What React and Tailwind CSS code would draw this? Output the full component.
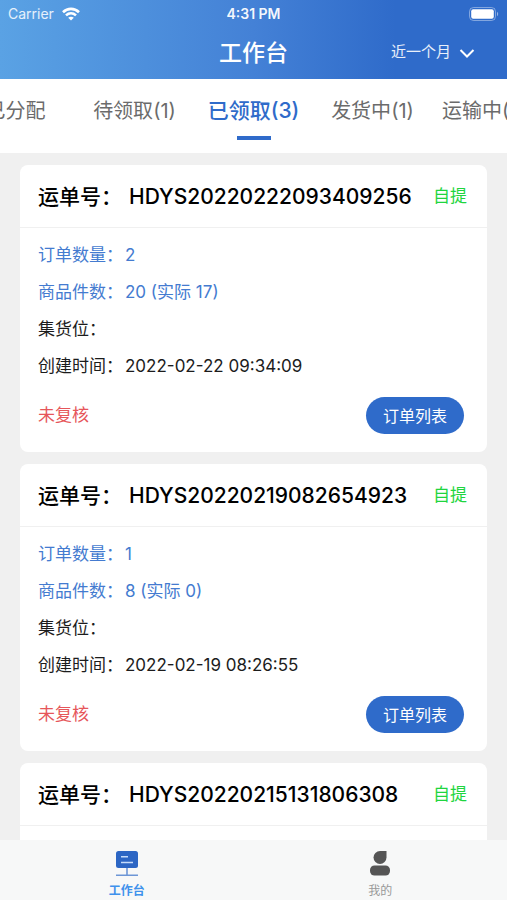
import React, { useState } from 'react';

const tabs = [
    { id: 'assigned', label: '已分配' },
    { id: 'pending', label: '待领取', count: 1 },
    { id: 'received', label: '已领取', count: 3 },
    { id: 'shipping', label: '发货中', count: 1 },
    { id: 'transit', label: '运输中', count: 28 },
];

const waybills = [
    { no: 'HDYS20220222093409256', orders: 2, goods: 20, actual: 17, location: '', created: '2022-02-22 09:34:09' },
    { no: 'HDYS20220219082654923', orders: 1, goods: 8, actual: 0, location: '', created: '2022-02-19 08:26:55' },
    { no: 'HDYS20220215131806308', orders: 1, goods: 6, actual: 0, location: '', created: '2022-02-15 13:18:06' },
];

function StatusBar() {
    return (
        <div className="grid grid-cols-3 items-center h-7 px-2 text-sm">
            <div className="flex items-center gap-2 text-white/85">
                <span>Carrier</span>
                <svg width="18" height="14" viewBox="0 0 18 14" fill="none" stroke="white" strokeWidth="2.6">
                    <path d="M1 5.2C5.6.7 12.4.7 17 5.2" />
                    <path d="M4 8.4c3-2.8 7-2.8 10 0" />
                    <path d="M9 13.6 6.2 10.8c1.6-1.5 4-1.5 5.6 0z" fill="white" stroke="none" />
                </svg>
            </div>
            <span className="text-center font-semibold text-white/95">4:31 PM</span>
            <svg className="justify-self-end" width="30" height="14" viewBox="0 0 30 14">
                <rect x="0.5" y="0.5" width="26" height="13" rx="4" fill="none" stroke="white" strokeOpacity="0.4" />
                <rect x="2.2" y="2.2" width="22.6" height="9.6" rx="2" fill="white" />
                <path d="M28 4.8c1.6.8 1.6 3.6 0 4.4z" fill="white" fillOpacity="0.5" />
            </svg>
        </div>
    );
}

function Header() {
    return (
        <header className="shrink-0 bg-linear-to-r from-[#5aa2e4] via-[#4481d6] via-50% to-[#2f6bca] to-78% text-white">
            <StatusBar />
            <div className="grid grid-cols-3 items-center h-[51px] pb-0.5">
                <h1 className="col-start-2 text-center text-[23px] leading-7 font-medium">工作台</h1>
                <button className="flex items-center justify-end gap-2 pr-8 text-[15px] text-white/90">
                    近一个月
                    <svg width="16" height="12" viewBox="0 0 16 12" fill="none" stroke="white" strokeWidth="2">
                        <path d="m1.5 3 6.5 6.5L14.5 3" />
                    </svg>
                </button>
            </div>
        </header>
    );
}

function InfoRow({ label, value, className }) {
    return (
        <p className={`flex gap-0.5 ${className || ''}`}>
            <span>{label}：</span>
            <span>{value}</span>
        </p>
    );
}

function WaybillCard({ bill }) {
    return (
        <article className="shrink-0 bg-white rounded-lg">
            <div className="flex items-center justify-between h-[63px] pt-0.5 pl-[18px] pr-5 border-b border-[#f0f0f0]">
                <h2 className="flex text-[21px] font-medium text-black whitespace-nowrap">
                    <span className="w-[91px]">运单号：</span>
                    <span>{bill.no}</span>
                </h2>
                <span className="text-[17px] text-[#1fd53f]">自提</span>
            </div>
            <div className="pt-[9px] pb-[18px] pl-[18px] pr-[23px] text-[17px] leading-[37px] text-[#1c1c1c]">
                <InfoRow label="订单数量" value={bill.orders} className="text-[#447bd0]" />
                <InfoRow label="商品件数" value={`${bill.goods} (实际 ${bill.actual})`} className="text-[#447bd0]" />
                <InfoRow label="集货位" value={bill.location} />
                <InfoRow label="创建时间" value={bill.created} />
                <div className="flex items-center justify-between mt-3">
                    <span className="text-[#e6565a]">未复核</span>
                    <button className="h-[37px] px-[17px] rounded-full bg-[#2f6bca] text-base text-white">订单列表</button>
                </div>
            </div>
        </article>
    );
}

export default function App() {
    const [activeTab, setActiveTab] = useState('received');

    return (
        <div className="flex flex-col h-screen overflow-hidden bg-[#f0f0f0] font-['Inter','Noto_Sans_CJK_SC',sans-serif]">
            <Header />

            {/* Status tabs */}
            <nav className="shrink-0 flex justify-center h-[74px] overflow-hidden bg-white">
                {tabs.map(tab => {
                    const active = tab.id === activeTab;
                    return (
                        <button
                            key={tab.id}
                            onClick={() => setActiveTab(tab.id)}
                            className={`shrink-0 w-[119px] flex flex-col items-center pt-[17px] whitespace-nowrap ${active ? 'text-[21px] font-medium text-[#2f6bca]' : 'text-xl text-[#6b6b6b]'}`}
                        >
                            <span className="leading-[30px]">{tab.label}{tab.count ? `(${tab.count})` : ''}</span>
                            {active && <span className="mt-2.5 w-[34px] h-1 bg-[#2f6bca]"></span>}
                        </button>
                    );
                })}
            </nav>

            {/* Waybill list */}
            <main className="flex-1 min-h-0 overflow-y-auto [scrollbar-width:none] flex flex-col gap-3 px-5 py-3">
                {waybills.map(bill => (
                    <WaybillCard key={bill.no} bill={bill} />
                ))}
            </main>

            {/* Bottom navigation */}
            <nav className="shrink-0 grid grid-cols-2 h-[60px] bg-[#f7f8f8] text-xs">
                <button className="flex flex-col items-center gap-1.5 pt-[11px] font-bold text-[#3f92ec]">
                    <svg width="24" height="26" viewBox="0 0 24 26">
                        <rect x="1" y="0" width="22" height="17" rx="2.5" fill="#2c66c4" />
                        <path d="M6 5.8h7M6 11.5h12" stroke="#c5dcfa" strokeWidth="1.6" />
                        <path d="M12 17v7M1 24.2h22" stroke="#6d96d6" strokeWidth="1.6" />
                    </svg>
                    <span>工作台</span>
                </button>
                <button className="flex flex-col items-center gap-1.5 pt-[11px] text-[#999999]">
                    <svg width="22" height="26" viewBox="0 0 22 26" fill="#555555">
                        <path d="M11 0h6.5v6.5A6.5 6.5 0 1 1 11 0z" />
                        <rect x="1" y="14.5" width="20" height="10" rx="4.5" />
                    </svg>
                    <span>我的</span>
                </button>
            </nav>
        </div>
    );
}
